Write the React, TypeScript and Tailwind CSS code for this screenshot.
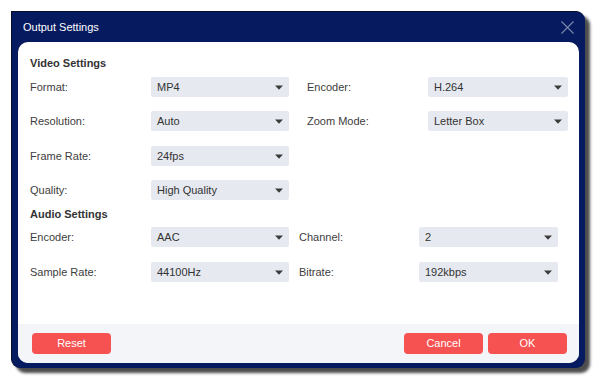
import React from 'react';

const font = { fontFamily: '"Liberation Sans", Arial, sans-serif' };

const Caret: React.FC = () => (
  <svg width="8" height="5" viewBox="0 0 8 5" className="shrink-0">
    <path d="M0 0.5h8L4 4.8z" fill="#3b3b3b" />
  </svg>
);

const Select: React.FC<{ value: string; width: string }> = ({ value, width }) => (
  <div className={`${width} h-[20px] rounded-[2px] bg-[#e6e9f0] flex items-center justify-between pl-[6px] pr-[6px] text-[11px] text-[#333]`}>
    <span>{value}</span>
    <Caret />
  </div>
);

const Label: React.FC<{ text: string; width: string }> = ({ text, width }) => (
  <div className={`${width} text-[11px] text-[#3d3d3d]`}>{text}</div>
);

const RedButton: React.FC<{ text: string }> = ({ text }) => (
  <button className="w-[79px] h-[21px] rounded-[4px] bg-[#f65252] text-white text-[11px] flex items-center justify-center">
    {text}
  </button>
);

const App: React.FC = () => {
  return (
    <div className="w-[600px] h-[382px] bg-white pl-[11px] pt-[11px]" style={font}>
      <div className="w-[574px] h-[357px] bg-[#061a5f] border-l border-t border-[#0a0f2a] rounded-tr-[9px] rounded-b-[9px] shadow-[5px_5px_3px_rgba(0,0,0,0.7)] flex flex-col">
        {/* title bar */}
        <div className="h-[30px] flex items-center justify-between pl-[11px] pr-[11px]">
          <span className="text-white text-[11px] pt-[1px]">Output Settings</span>
          <svg width="13" height="13" viewBox="0 0 13 13">
            <path d="M0.5 0.5l12 12M12.5 0.5l-12 12" stroke="#7e88ad" strokeWidth="1.1" />
          </svg>
        </div>

        {/* panel */}
        <div className="ml-[6px] mr-[6px] h-[321px] bg-white rounded-[10px] flex flex-col overflow-hidden">
          <div className="flex-1 pl-[12px] pt-[14px]">
            <div className="h-[14px] leading-[14px] text-[11px] font-bold text-[#333]">Video Settings</div>

            <div className="mt-[7px] flex items-center">
              <Label text="Format:" width="w-[121px]" />
              <Select value="MP4" width="w-[138px]" />
              <Label text="Encoder:" width="ml-[18px] w-[121px]" />
              <Select value="H.264" width="w-[140px]" />
            </div>
            <div className="mt-[14px] flex items-center">
              <Label text="Resolution:" width="w-[121px]" />
              <Select value="Auto" width="w-[138px]" />
              <Label text="Zoom Mode:" width="ml-[18px] w-[121px]" />
              <Select value="Letter Box" width="w-[140px]" />
            </div>
            <div className="mt-[15px] flex items-center">
              <Label text="Frame Rate:" width="w-[121px]" />
              <Select value="24fps" width="w-[138px]" />
            </div>
            <div className="mt-[14px] flex items-center">
              <Label text="Quality:" width="w-[121px]" />
              <Select value="High Quality" width="w-[138px]" />
            </div>

            <div className="mt-[7px] h-[14px] leading-[14px] text-[11px] font-bold text-[#333]">Audio Settings</div>

            <div className="mt-[6px] flex items-center">
              <Label text="Encoder:" width="w-[121px]" />
              <Select value="AAC" width="w-[138px]" />
              <Label text="Channel:" width="ml-[10px] w-[120px]" />
              <Select value="2" width="w-[139px]" />
            </div>
            <div className="mt-[15px] flex items-center">
              <Label text="Sample Rate:" width="w-[121px]" />
              <Select value="44100Hz" width="w-[138px]" />
              <Label text="Bitrate:" width="ml-[10px] w-[120px]" />
              <Select value="192kbps" width="w-[139px]" />
            </div>
          </div>

          {/* footer */}
          <div className="h-[39px] bg-[#f3f5f9] flex items-center justify-between pl-[14px] pr-[12px]">
            <RedButton text="Reset" />
            <div className="flex gap-[5px]">
              <RedButton text="Cancel" />
              <RedButton text="OK" />
            </div>
          </div>
        </div>
      </div>
    </div>
  );
};

export default App;
